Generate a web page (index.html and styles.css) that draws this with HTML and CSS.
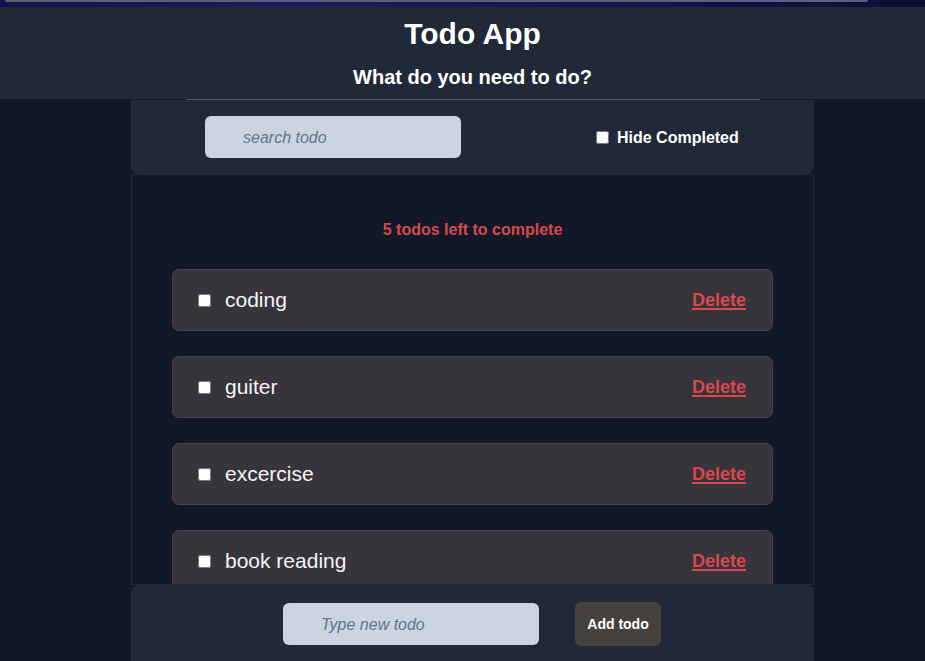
FILE: index.html
```html
<!DOCTYPE html>
<html lang="en">
<head>
<meta charset="utf-8">
<title>Todo App</title>
<link rel="stylesheet" href="styles.css">
</head>
<body>
<div class="page">
  <div class="sky"><div class="sky-bar"></div></div>
  <header class="header">
    <h1 class="title">Todo App</h1>
    <h2 class="subtitle">What do you need to do?</h2>
  </header>
  <main class="app">
    <div class="divider"></div>
    <section class="search-panel">
      <input class="field search" type="text" placeholder="search todo">
      <label class="hide-label"><input type="checkbox" class="check"> Hide Completed</label>
    </section>
    <section class="list">
      <p class="left-count">5 todos left to complete</p>
      <div class="item"><label class="item-main"><input type="checkbox" class="check"><span class="item-text">coding</span></label><a href="#" class="delete">Delete</a></div>
      <div class="item"><label class="item-main"><input type="checkbox" class="check"><span class="item-text">guiter</span></label><a href="#" class="delete">Delete</a></div>
      <div class="item"><label class="item-main"><input type="checkbox" class="check"><span class="item-text">excercise</span></label><a href="#" class="delete">Delete</a></div>
      <div class="item"><label class="item-main"><input type="checkbox" class="check"><span class="item-text">book reading</span></label><a href="#" class="delete">Delete</a></div>
    </section>
    <section class="add-panel">
      <input class="field add-input" type="text" placeholder="Type new todo">
      <button class="add-btn">Add todo</button>
    </section>
  </main>
</div>
</body>
</html>
```

FILE: styles.css
```css
html, body {
  margin: 0;
  padding: 0;
  overflow: hidden;
  background: #111827;
  font-family: "Liberation Sans", Arial, sans-serif;
  color: #ffffff;
}
.page {
  width: 945px;
}
.sky {
  height: 7px;
  background: linear-gradient(90deg, #14124a 0%, #1d1a5e 30%, #171550 60%, #0f1040 85%, #0c0d33 100%);
  position: relative;
}
.sky-bar {
  position: absolute;
  left: 5px;
  top: 0;
  width: 863px;
  height: 2px;
  background: #5d5f78;
  border-radius: 0 0 2px 2px;
}
.header {
  background: #1f2937;
  height: 92px;
  text-align: center;
  padding-top: 1px;
  box-sizing: border-box;
}
.title {
  margin: 8px 0 0;
  font-size: 30px;
  line-height: 36px;
  font-weight: 700;
}
.subtitle {
  margin: 13px 0 0;
  font-size: 20px;
  line-height: 24px;
  font-weight: 700;
}
.app {
  width: 683px;
  margin: 0 auto;
  display: flex;
  flex-direction: column;
}
.divider {
  height: 1px;
  width: 574px;
  margin: 0 auto;
  background: #555962;
}
.search-panel {
  height: 74px;
  background: #1f2937;
  border-radius: 0 0 8px 8px;
  display: flex;
  align-items: center;
  padding: 0 0 0 74px;
  box-sizing: border-box;
}
.field {
  width: 256px;
  height: 42px;
  box-sizing: border-box;
  border: none;
  border-radius: 6px;
  background: #cbd5e1;
  padding: 2px 0 0 38px;
  font-family: "Liberation Sans", Arial, sans-serif;
  font-size: 16px;
  font-style: italic;
  color: #334155;
  outline: none;
}
.field::placeholder {
  color: #64748b;
  font-style: italic;
}
.hide-label {
  margin-left: 135px;
  margin-top: 1px;
  display: flex;
  align-items: center;
  font-size: 16px;
  font-weight: 700;
  gap: 8px;
}
.check {
  width: 13px;
  height: 13px;
  margin: 0;
}
.list {
  height: 411px;
  border: 1px solid #1f2937;
  box-sizing: border-box;
  overflow: hidden;
  padding: 38px 40px 0;
  background: #111827;
}
.left-count {
  margin: 0 0 22px;
  text-align: center;
  color: #d9484d;
  font-size: 16px;
  line-height: 34px;
  font-weight: 700;
}
.item {
  height: 62px;
  box-sizing: border-box;
  border: 1px solid #46424c;
  border-radius: 7px;
  background: #38343b;
  display: flex;
  align-items: center;
  justify-content: space-between;
  padding: 0 26px 0 25px;
  margin-bottom: 25px;
}
.item-main {
  display: flex;
  align-items: center;
  gap: 14px;
}
.item-text {
  font-size: 21px;
  color: #f3f4f6;
}
.delete {
  color: #d9484d;
  font-size: 18px;
  font-weight: 700;
  text-decoration: underline;
  text-underline-offset: 2px;
  text-decoration-thickness: 2px;
}
.add-panel {
  height: 80px;
  background: #1f2937;
  border-radius: 8px 8px 0 0;
  display: flex;
  align-items: flex-start;
  padding: 18px 0 0 152px;
  box-sizing: border-box;
}
.add-btn {
  margin-left: 36px;
  margin-top: -1px;
  width: 86px;
  height: 44px;
  background: #45413c;
  border: none;
  border-radius: 6px;
  color: #ffffff;
  font-family: "Liberation Sans", Arial, sans-serif;
  font-size: 14px;
  font-weight: 700;
}
```
